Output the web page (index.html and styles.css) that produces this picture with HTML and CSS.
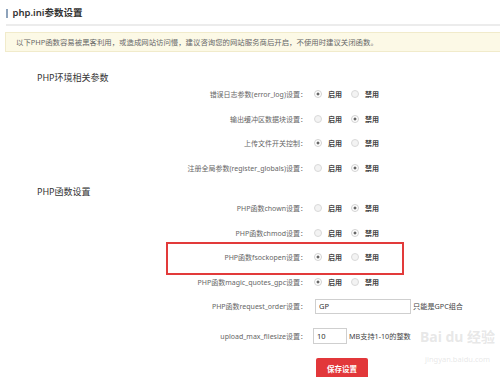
FILE: index.html
```html
<!DOCTYPE html>
<html lang="zh-CN">
<head>
  <meta charset="UTF-8">
  <title>php.ini参数设置</title>
  <meta name="viewport" content="width=device-width, initial-scale=1.0">
  <link rel="stylesheet" href="styles.css">
</head>
<body>
  <div class="page">
    <div class="title"><span class="title-bar"></span>php.ini参数设置</div>

    <div class="notice">以下PHP函数容易被黑客利用，或造成网站访问慢，建议咨询您的网站服务商后开启，不使用时建议关闭函数。</div>

    <form class="form">
      <div class="section-title">PHP环境相关参数</div>

      <div class="row">
        <div class="row-label">错误日志参数(error_log)设置：</div>
        <div class="row-ctrl">
          <label class="opt"><input type="radio" name="error_log" checked>启用</label>
          <label class="opt"><input type="radio" name="error_log">禁用</label>
        </div>
      </div>
      <div class="row">
        <div class="row-label">输出缓冲区数据块设置：</div>
        <div class="row-ctrl">
          <label class="opt"><input type="radio" name="buffering">启用</label>
          <label class="opt"><input type="radio" name="buffering" checked>禁用</label>
        </div>
      </div>
      <div class="row">
        <div class="row-label">上传文件开关控制：</div>
        <div class="row-ctrl">
          <label class="opt"><input type="radio" name="file_uploads" checked>启用</label>
          <label class="opt"><input type="radio" name="file_uploads">禁用</label>
        </div>
      </div>
      <div class="row">
        <div class="row-label">注册全局参数(register_globals)设置：</div>
        <div class="row-ctrl">
          <label class="opt"><input type="radio" name="register_globals">启用</label>
          <label class="opt"><input type="radio" name="register_globals" checked>禁用</label>
        </div>
      </div>

      <div class="section-title section-title-2">PHP函数设置</div>

      <div class="row">
        <div class="row-label">PHP函数chown设置：</div>
        <div class="row-ctrl">
          <label class="opt"><input type="radio" name="chown">启用</label>
          <label class="opt"><input type="radio" name="chown" checked>禁用</label>
        </div>
      </div>
      <div class="row">
        <div class="row-label">PHP函数chmod设置：</div>
        <div class="row-ctrl">
          <label class="opt"><input type="radio" name="chmod">启用</label>
          <label class="opt"><input type="radio" name="chmod" checked>禁用</label>
        </div>
      </div>
      <div class="row row-marked">
        <div class="row-label">PHP函数fsockopen设置：</div>
        <div class="row-ctrl">
          <label class="opt"><input type="radio" name="fsockopen" checked>启用</label>
          <label class="opt"><input type="radio" name="fsockopen">禁用</label>
        </div>
      </div>
      <div class="row">
        <div class="row-label">PHP函数magic_quotes_gpc设置：</div>
        <div class="row-ctrl">
          <label class="opt"><input type="radio" name="magic_quotes_gpc" checked>启用</label>
          <label class="opt"><input type="radio" name="magic_quotes_gpc">禁用</label>
        </div>
      </div>
      <div class="row">
        <div class="row-label">PHP函数request_order设置：</div>
        <div class="row-ctrl">
          <input class="text-input input-wide" type="text" value="GP">
          <span class="hint">只能是GPC组合</span>
        </div>
      </div>
      <div class="row row-upload">
        <div class="row-label">upload_max_filesize设置：</div>
        <div class="row-ctrl">
          <input class="text-input input-short" type="text" value="10">
          <span class="hint">MB支持1-10的整数</span>
        </div>
      </div>
      <div class="row row-submit">
        <div class="row-label"></div>
        <div class="row-ctrl">
          <button type="button" class="btn-save">保存设置</button>
        </div>
      </div>
    </form>

    <div class="watermark">
      <div class="wm-logo">Bai du 经验</div>
      <div class="wm-url">jingyan.baidu.com</div>
    </div>
  </div>
</body>
</html>
```

FILE: styles.css
```css
* { box-sizing: border-box; }
body {
  margin: 0;
  background: #fff;
  color: #333;
  font-family: "Noto Sans", "Noto Sans CJK SC", sans-serif;
}
.page {
  position: relative;
  width: 500px;
  height: 377px;
  overflow: hidden;
}

/* Title */
.title {
  margin-left: 6px;
  padding-top: 8px;
  height: 26px;
  line-height: 10px;
  font-size: 9.5px;
  font-weight: 600;
  color: #333;
  border-bottom: 2px solid #ececec;
  display: flex;
  align-items: flex-start;
}
.title-bar {
  display: inline-block;
  width: 1.5px;
  height: 9px;
  margin: 1px 5px 0 0;
  background: #8ea3bb;
}

/* Notice */
.notice {
  margin: 6px 0 0 5px;
  height: 20px;
  padding-left: 10px;
  line-height: 18px;
  font-size: 7.4px;
  color: #666;
  background: #fcf9e6;
  border: 1px solid #f1ebcb;
  border-right: none;
  white-space: nowrap;
}

/* Form */
.form {
  margin: 22px 0 0;
}
.section-title {
  padding-left: 37px;
  height: 8px;
  line-height: 8px;
  font-size: 9px;
  color: #333;
}
.section-title-2 {
  margin-top: 8px;
}
.row {
  display: grid;
  grid-template-columns: 307px 1fr;
  align-items: center;
  height: 24.5px;
  position: relative;
}
.row-label {
  text-align: right;
  font-size: 7px;
  color: #666;
  white-space: nowrap;
}
.row-ctrl {
  display: flex;
  align-items: center;
  padding-left: 7px;
}
.opt {
  display: inline-flex;
  align-items: center;
  gap: 6px;
  margin-right: 9px;
  font-size: 7px;
  font-weight: 700;
  color: #444;
}
.opt input {
  appearance: none;
  -webkit-appearance: none;
  margin: 0;
  width: 8px;
  height: 8px;
  border: 1px solid #d9d9d9;
  border-radius: 50%;
  background: #f3f3f3;
}
.opt input:checked {
  border-color: #d2d2d2;
  background: radial-gradient(circle, #666 0, #666 1.1px, #fff 1.8px);
}

/* Marked row (red annotation box) */
.row-marked::after {
  content: "";
  position: absolute;
  left: 166px;
  top: -3px;
  width: 234px;
  height: 29px;
  border: 2px solid #e23a3a;
  pointer-events: none;
}

/* Inputs */
.text-input {
  height: 15px;
  padding: 0 3px;
  border: 1px solid #cfcfcf;
  font-family: inherit;
  font-size: 7.5px;
  color: #333;
  background: #fff;
  outline: none;
}
.input-wide { width: 96px; margin-left: 1px; }
.input-short { width: 34px; margin-left: -1px; height: 16px; }
.hint {
  margin-left: 2px;
  font-size: 7.2px;
  color: #444;
}
.row-upload { margin-top: 5px; }
.row-submit { margin-top: 10px; height: 21px; }

.btn-save {
  margin-left: 2px;
  width: 52px;
  height: 21px;
  border: none;
  border-radius: 2px;
  background: #e2373a;
  color: #fff;
  font-family: inherit;
  font-size: 7.5px;
  font-weight: 700;
  cursor: pointer;
}

/* Watermark */
.watermark {
  position: absolute;
  left: 420px;
  top: 326px;
  color: rgba(195, 195, 195, 0.4);
  pointer-events: none;
  text-align: center;
}
.wm-logo {
  font-size: 14px;
  font-weight: 700;
  line-height: 22px;
}
.wm-url {
  margin-top: 6px;
  font-size: 7.5px;
  line-height: 10px;
}
```
